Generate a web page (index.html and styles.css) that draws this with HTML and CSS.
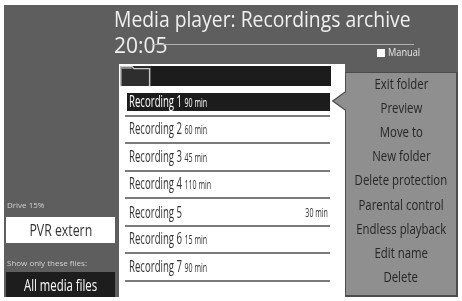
FILE: index.html
```html
<!DOCTYPE html>
<html>
<head>
<meta charset="utf-8">
<link rel="stylesheet" href="styles.css">
</head>
<body>
<div class="screen">
  <header class="head">
    <h1 class="title"><span class="cx">Media player: Recordings archive</span></h1>
    <div class="timerow">
      <span class="time">20:05</span>
      <div class="track">
        <div class="rule"></div>
        <div class="manual"><span class="check"></span><span class="cx">Manual</span></div>
      </div>
    </div>
  </header>
  <div class="main">
    <aside class="side">
      <div class="label drive">Drive 15%</div>
      <div class="box light"><span class="cx c">PVR extern</span></div>
      <div class="label files">Show only these files:</div>
      <div class="box dark"><span class="cx c">All media files</span></div>
    </aside>
    <section class="list">
      <div class="folderbar">
        <svg class="folder" width="31" height="20" viewBox="0 0 31 20">
          <rect x="0" y="0" width="31" height="20" fill="#2e2e2e"/>
          <path d="M0.8 20 V0.8 H12 L14 2.6 H29.6 V20" fill="none" stroke="#c8c8c8" stroke-width="1.4"/>
          <path d="M2 2.2 H11.5" stroke="#9a9a9a" stroke-width="1.2"/>
        </svg>
      </div>
      <div class="rows">
        <div class="row"><div class="item sel"><span class="cx">Recording 1 <small>90 min</small></span></div></div>
        <div class="row"><div class="item"><span class="cx">Recording 2 <small>60 min</small></span></div></div>
        <div class="row"><div class="item"><span class="cx">Recording 3 <small>45 min</small></span></div></div>
        <div class="row"><div class="item"><span class="cx">Recording 4 <small>110 min</small></span></div></div>
        <div class="row"><div class="item split"><span class="cx">Recording 5</span><span class="cx r"><small>30 min</small></span></div></div>
        <div class="row"><div class="item"><span class="cx">Recording 6 <small>15 min</small></span></div></div>
        <div class="row"><div class="item"><span class="cx">Recording 7 <small>90 min</small></span></div></div>
      </div>
    </section>
    <nav class="menu">
      <svg class="pointer" width="14" height="20" viewBox="0 0 14 20">
        <polygon points="14,0.8 0.8,10 14,19.2" fill="#8f8f8f"/>
        <polyline points="13.5,0.8 0.8,10 13.5,19.2" fill="none" stroke="#4c4c4c" stroke-width="1.2"/>
      </svg>
      <ul class="items">
        <li><span class="cx c">Exit folder</span></li>
        <li><span class="cx c">Preview</span></li>
        <li><span class="cx c">Move to</span></li>
        <li><span class="cx c">New folder</span></li>
        <li><span class="cx c">Delete protection</span></li>
        <li><span class="cx c">Parental control</span></li>
        <li><span class="cx c">Endless playback</span></li>
        <li><span class="cx c">Edit name</span></li>
        <li><span class="cx c">Delete</span></li>
      </ul>
    </nav>
  </div>
</div>
</body>
</html>
```
FILE: styles.css
```css
body {
  margin: 0;
  background: #fff;
  font-family: "Open Sans", "Noto Sans", sans-serif;
}

.screen {
  margin: 5px 4px 0 4px;
  width: 454px;
  height: 292px;
  background: #5e5e5e;
  display: flex;
  flex-direction: column;
  filter: grayscale(1);
}

.cx {
  display: inline-block;
  white-space: nowrap;
  transform-origin: left center;
}
.cx.c { transform-origin: center center; }
.cx.r { transform-origin: right center; }

/* header */
.head {
  height: 59px;
  flex: none;
  box-sizing: border-box;
  padding: 2px 0 0 110px;
  color: #f0f0f0;
}
.title {
  margin: 0;
  font-size: 21px;
  font-weight: 400;
  line-height: 24px;
  white-space: nowrap;
}
.title .cx { transform: scaleX(0.92); }
.timerow {
  display: flex;
  margin-top: 2px;
  height: 24px;
}
.time {
  font-size: 21px;
  line-height: 24px;
}
.track {
  flex: none;
  display: flex;
  flex-direction: column;
  align-items: flex-end;
  margin-left: -16px;
  width: 271px;
}
.rule {
  align-self: flex-start;
  width: 262px;
  height: 1.5px;
  margin-top: 10.5px;
  background: #b0b0b0;
}
.manual {
  display: flex;
  align-items: center;
  gap: 3px;
  margin-top: 4px;
  height: 9px;
  font-size: 10px;
  line-height: 9px;
  color: #e8e8e8;
}
.manual .cx { transform: scaleX(0.92); }
.check {
  width: 8px;
  height: 8px;
  background: #fff;
}

/* main */
.main {
  flex: 1;
  display: flex;
  min-height: 0;
}

.side {
  width: 115px;
  flex: none;
  box-sizing: border-box;
  padding-left: 2px;
  display: flex;
  flex-direction: column;
  justify-content: flex-end;
}
.label {
  font-size: 8px;
  line-height: 12px;
  padding-left: 1px;
  color: #d2d2d2;
  white-space: nowrap;
}
.label.drive { margin-bottom: 6px; }
.label.files { margin-bottom: 3px; }
.box {
  width: 109px;
  display: flex;
  align-items: center;
  justify-content: center;
  font-size: 16px;
  line-height: 18px;
}
.box.light {
  height: 26px;
  background: #fff;
  color: #333;
  margin-bottom: 14px;
}
.box.light .cx { transform: scaleX(0.77); }
.box.dark {
  height: 25px;
  background: #1d1d1d;
  color: #fff;
}
.box.dark .cx { transform: scaleX(0.71); }

/* list */
.list {
  width: 226px;
  flex: none;
  background: #fff;
  box-sizing: border-box;
  padding-top: 2px;
}
.folderbar {
  margin-left: 1px;
  width: 211px;
  height: 20px;
  background: #1c1c1c;
  display: flex;
}
.folder { display: block; }
.rows {
  margin: 3px 0 0 6px;
  width: 205px;
}
.row {
  height: 25.5px;
  border-bottom: 2px solid #7b7b7b;
  display: flex;
  align-items: center;
  color: #333;
}
.item {
  flex: 1;
  height: 18px;
  margin-left: 2px;
  padding: 0 2px;
  display: flex;
  align-items: center;
  font-size: 17px;
  line-height: 18px;
}
.item .cx { transform: scaleX(0.565); }
.item small { font-size: 12.5px; }
.item.sel {
  background: #1c1c1c;
  color: #fff;
}
.item.split { justify-content: space-between; }

/* popup menu */
.menu {
  position: relative;
  width: 113px;
  flex: none;
  margin-top: 8px;
  box-sizing: border-box;
  background: #8f8f8f;
  border: 1px solid #4c4c4c;
  border-right-width: 2px;
  border-bottom-width: 2px;
}
.pointer {
  position: absolute;
  left: -14px;
  top: 18px;
}
.items {
  list-style: none;
  margin: -2px 0 0 0;
  padding: 0;
}
.items li {
  height: 24.1px;
  display: flex;
  align-items: center;
  justify-content: center;
  font-size: 15px;
  line-height: 18px;
  color: #262626;
}
.items .cx { transform: scaleX(0.76); }
```
